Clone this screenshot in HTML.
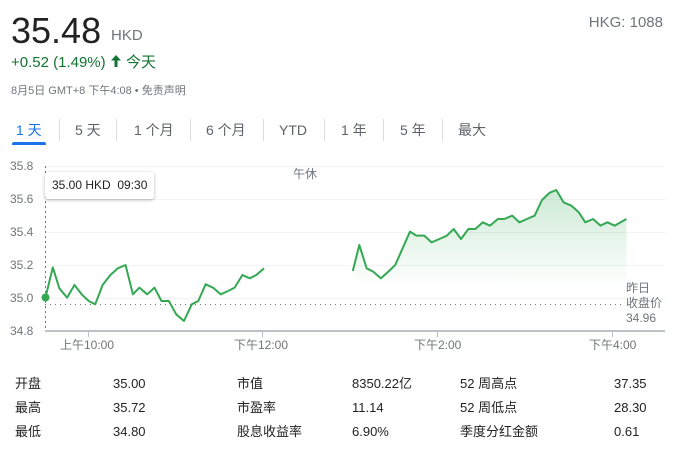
<!DOCTYPE html>
<html><head><meta charset="utf-8"><style>
body{margin:0;width:676px;height:454px;background:#fff;font-family:"Liberation Sans","Noto Sans CJK SC",sans-serif;position:relative;overflow:hidden;color:#222}
.a{position:absolute;white-space:nowrap}
.tab{position:absolute;top:121px;font-size:14px;line-height:18px;color:#5f6368}
.sep{position:absolute;top:119px;width:1px;height:22px;background:#dadce0}
.t{position:absolute;font-size:13px;line-height:16px;color:#222;white-space:nowrap}
.ax{position:absolute;font-size:12px;line-height:14px;color:#70757a}
</style></head><body>
<div class="a" style="left:11px;top:10px;font-size:36px;color:#222">35.48</div>
<div class="a" style="left:111px;top:27px;font-size:15px;color:#70757a">HKD</div>
<div class="a" style="right:13px;top:14px;font-size:15px;color:#70757a">HKG: 1088</div>
<div class="a" style="left:11px;top:53px;font-size:15px;line-height:20px;color:#137333">+0.52 (1.49%) <svg width="12" height="14" viewBox="0 0 12 14" style="vertical-align:-1px"><path d="M6 1 L11 6.5 L7.5 6.5 L7.5 13 L4.5 13 L4.5 6.5 L1 6.5Z" fill="#137333"/></svg> 今天</div>
<div class="a" style="left:11px;top:82px;font-size:11px;color:#70757a">8月5日 GMT+8 下午4:08 • 免责声明</div>
<div class="tab" style="left:16px;color:#1a73e8">1 天</div>
<div class="a" style="left:12px;top:142px;width:34px;height:3px;background:#1a73e8;border-radius:2px 2px 0 0"></div>
<div class="sep" style="left:59px"></div>
<div class="tab" style="left:75px">5 天</div>
<div class="sep" style="left:116px"></div>
<div class="tab" style="left:134px">1 个月</div>
<div class="sep" style="left:190px"></div>
<div class="tab" style="left:206px">6 个月</div>
<div class="sep" style="left:263px"></div>
<div class="tab" style="left:279px">YTD</div>
<div class="sep" style="left:324px"></div>
<div class="tab" style="left:341px">1 年</div>
<div class="sep" style="left:383px"></div>
<div class="tab" style="left:400px">5 年</div>
<div class="sep" style="left:442px"></div>
<div class="tab" style="left:458px">最大</div>

<svg class="a" style="left:0;top:0" width="676" height="454">
<defs><linearGradient id="g" x1="0" y1="0" x2="0" y2="1"><stop offset="0" stop-color="#34a853" stop-opacity="0.25"/><stop offset="1" stop-color="#34a853" stop-opacity="0"/></linearGradient></defs>
<g stroke="#f1f3f4" stroke-width="1">
<line x1="45" y1="166.5" x2="665" y2="166.5"/><line x1="45" y1="199.5" x2="665" y2="199.5"/><line x1="45" y1="232.5" x2="665" y2="232.5"/><line x1="45" y1="265.5" x2="665" y2="265.5"/><line x1="45" y1="298.5" x2="665" y2="298.5"/>
</g>
<line x1="45" y1="331" x2="665" y2="331" stroke="#bdc1c6" stroke-width="2"/>
<g stroke="#bdc1c6"><line x1="88.5" y1="331" x2="88.5" y2="337"/><line x1="262.5" y1="331" x2="262.5" y2="337"/><line x1="437.5" y1="331" x2="437.5" y2="337"/><line x1="612.5" y1="331" x2="612.5" y2="337"/></g>
<line x1="45.5" y1="166" x2="45.5" y2="331" stroke="#70757a" stroke-dasharray="2,3"/>
<line x1="45" y1="304.5" x2="625" y2="304.5" stroke="#70757a" stroke-dasharray="1,4"/>
<g transform="translate(0,150) scale(0.4329,0.3333)">
<path d="M815,363 L830,285 847,355 862,365 880,385 897,365 913,345 930,295 947,245 962,257 980,257 997,277 1015,267 1032,257 1048,237 1065,267 1082,237 1098,237 1115,217 1132,227 1150,207 1165,207 1183,197 1200,217 1217,207 1235,197 1252,150 1270,128 1285,120 1302,157 1320,167 1337,187 1352,217 1370,207 1387,227 1403,217 1420,227 1447,207 L1447,410 L815,410Z" fill="url(#g)"/>
<g fill="none" stroke="#34a853" stroke-width="2" stroke-linejoin="round">
<path vector-effect="non-scaling-stroke" d="M105,443 L122,352 137,415 155,443 172,405 190,435 205,453 220,463 237,405 255,375 272,355 290,345 307,433 322,413 340,433 357,413 373,453 390,453 407,493 425,513 443,463 458,453 475,403 492,413 510,433 527,423 542,413 560,375 577,385 592,375 610,355"/>
<path vector-effect="non-scaling-stroke" d="M815,363 L830,285 847,355 862,365 880,385 897,365 913,345 930,295 947,245 962,257 980,257 997,277 1015,267 1032,257 1048,237 1065,267 1082,237 1098,237 1115,217 1132,227 1150,207 1165,207 1183,197 1200,217 1217,207 1235,197 1252,150 1270,128 1285,120 1302,157 1320,167 1337,187 1352,217 1370,207 1387,227 1403,217 1420,227 1447,207"/>
</g></g>
<circle cx="45.5" cy="297.5" r="4" fill="#34a853"/>
</svg>
<div class="ax" style="left:10px;top:159px">35.8</div>
<div class="ax" style="left:10px;top:192px">35.6</div>
<div class="ax" style="left:10px;top:225px">35.4</div>
<div class="ax" style="left:10px;top:258px">35.2</div>
<div class="ax" style="left:10px;top:291px">35.0</div>
<div class="ax" style="left:10px;top:324px">34.8</div>
<div class="ax" style="left:60px;top:338px">上午10:00</div>
<div class="ax" style="left:234px;top:338px">下午12:00</div>
<div class="ax" style="left:414px;top:338px">下午2:00</div>
<div class="ax" style="left:589px;top:338px">下午4:00</div>
<div class="ax" style="left:293px;top:167px">午休</div>
<div class="ax" style="left:626px;top:281px;line-height:15px">昨日<br>收盘价<br>34.96</div>
<div class="a" style="left:45px;top:172px;width:109px;height:27px;background:#fff;border-radius:3px;box-shadow:0 1px 3px rgba(0,0,0,.3);font-size:12px;line-height:27px;padding-left:7px;box-sizing:border-box;color:#222">35.00 HKD&nbsp;&nbsp;09:30</div>

<div class="t" style="left:15px;top:376px">开盘</div><div class="t" style="left:113px;top:376px">35.00</div>
<div class="t" style="left:237px;top:376px">市值</div><div class="t" style="left:352px;top:376px">8350.22亿</div>
<div class="t" style="left:460px;top:376px">52 周高点</div><div class="t" style="left:614px;top:376px">37.35</div>
<div class="t" style="left:15px;top:400px">最高</div><div class="t" style="left:113px;top:400px">35.72</div>
<div class="t" style="left:237px;top:400px">市盈率</div><div class="t" style="left:352px;top:400px">11.14</div>
<div class="t" style="left:460px;top:400px">52 周低点</div><div class="t" style="left:614px;top:400px">28.30</div>
<div class="t" style="left:15px;top:424px">最低</div><div class="t" style="left:113px;top:424px">34.80</div>
<div class="t" style="left:237px;top:424px">股息收益率</div><div class="t" style="left:352px;top:424px">6.90%</div>
<div class="t" style="left:460px;top:424px">季度分红金额</div><div class="t" style="left:614px;top:424px">0.61</div>
</body></html>
